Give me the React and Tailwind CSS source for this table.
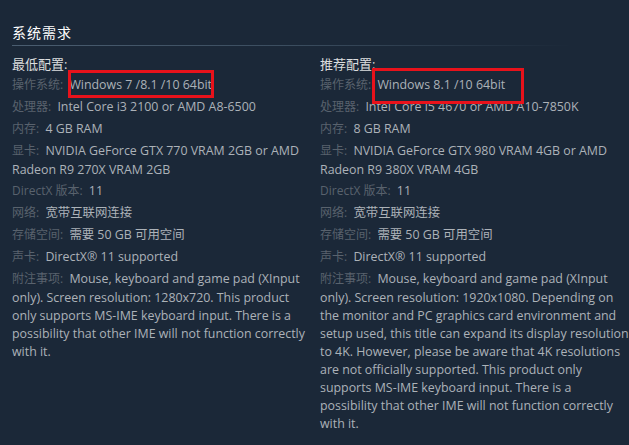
import React from 'react';

const minReqs = [
  ['操作系统:', 'Windows 7 /8.1 /10 64bit'],
  ['处理器:', 'Intel Core i3 2100 or AMD A8-6500'],
  ['内存:', '4 GB RAM'],
  ['显卡:', 'NVIDIA GeForce GTX 770 VRAM 2GB or AMD Radeon R9 270X VRAM 2GB'],
  ['DirectX 版本:', '11'],
  ['网络:', '宽带互联网连接'],
  ['存储空间:', '需要 50 GB 可用空间'],
  ['声卡:', 'DirectX® 11 supported'],
  ['附注事项:', 'Mouse, keyboard and game pad (XInput only). Screen resolution: 1280x720. This product only supports MS-IME keyboard input. There is a possibility that other IME will not function correctly with it.'],
];

const recReqs = [
  ['操作系统:', 'Windows 8.1 /10 64bit'],
  ['处理器:', 'Intel Core i5 4670 or AMD A10-7850K'],
  ['内存:', '8 GB RAM'],
  ['显卡:', 'NVIDIA GeForce GTX 980 VRAM 4GB or AMD Radeon R9 380X VRAM 4GB'],
  ['DirectX 版本:', '11'],
  ['网络:', '宽带互联网连接'],
  ['存储空间:', '需要 50 GB 可用空间'],
  ['声卡:', 'DirectX® 11 supported'],
  ['附注事项:', 'Mouse, keyboard and game pad (XInput only). Screen resolution: 1920x1080. Depending on the monitor and PC graphics card environment and setup used, this title can expand its display resolution to 4K. However, please be aware that 4K resolutions are not officially supported. This product only supports MS-IME keyboard input. There is a possibility that other IME will not function correctly with it.'],
];

const font = { fontFamily: '"Open Sans", "Noto Sans CJK SC", sans-serif' };

const ReqColumn = ({ title, items, box, className }) => (
  <div className={`relative ${className}`}>
    <div className="text-[13px] leading-[20px] text-[#dcdedf] mb-[1px]">{title}</div>
    <ul>
      {items.map(([label, value]) => (
        <li key={label} className="text-[12.4px] leading-[18px] text-[#acb2b8] mb-[2px]">
          <span className="text-[12px] leading-[20px] text-[#59626d] mr-[3px]">{label}</span>{' '}
          {value}
        </li>
      ))}
    </ul>
    {/* 红框标注 */}
    <div className={`absolute border-[3px] border-[#e8121b] ${box}`} />
  </div>
);

export default function App() {
  return (
    <div className="w-[629px] h-[445px] bg-[#1b2838] overflow-hidden" style={font}>
      <div className="px-3 pt-[23px]">
        <h2 className="text-[14px] leading-[20px] text-white tracking-[1px]">系统需求</h2>
        <div className="h-px mt-[2px] bg-gradient-to-r from-[#4a5d70] via-[#3b4d5f] to-transparent w-[560px]" />
      </div>
      <div className="flex pl-3 pt-[8px] gap-[5px]">
        <ReqColumn className="w-[303px] shrink-0" title="最低配置:" items={minReqs} box="left-[56px] top-[16px] w-[146px] h-[28px]" />
        <ReqColumn className="flex-1 min-w-0" title="推荐配置:" items={recReqs} box="left-[52px] top-[14px] w-[152px] h-[36px]" />
      </div>
    </div>
  );
}
